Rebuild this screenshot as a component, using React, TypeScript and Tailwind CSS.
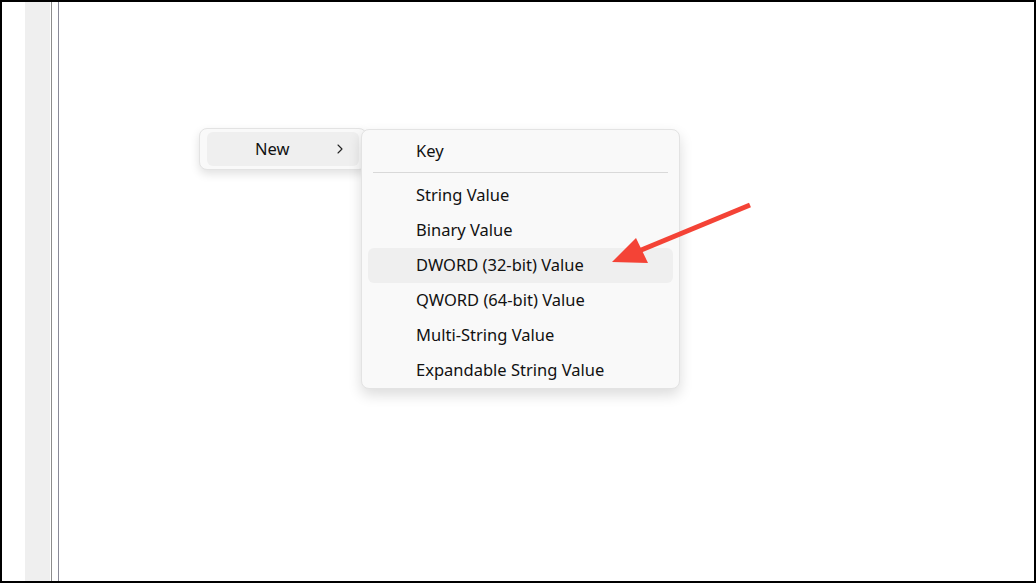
import { ChevronRight } from 'lucide-react';

const items = [
  'String Value',
  'Binary Value',
  'DWORD (32-bit) Value',
  'QWORD (64-bit) Value',
  'Multi-String Value',
  'Expandable String Value',
];

export default function App() {
  return (
    <div
      className="relative w-[1036px] h-[583px] border-2 border-black bg-white flex overflow-hidden"
      style={{ fontFamily: '"Noto Sans", "Segoe UI", Arial, sans-serif' }}
    >
      {/* left gutter of the registry editor */}
      <div className="w-[23px] shrink-0" />
      <div className="w-[25px] shrink-0 bg-[#efefef]" />
      <div className="w-[1px] shrink-0" />
      <div className="w-[1px] shrink-0 bg-[#8c8c8c]" />
      <div className="w-[6px] shrink-0" />
      <div className="w-[1px] shrink-0 bg-[#8a8a98]" />
      <div className="flex-1" />

      {/* context menu */}
      <div className="absolute left-[197px] top-[126px] w-[168px] p-[3px] pl-[7px] pr-[7px] bg-[#f9f9f9] border border-[#e3e3e3] rounded-lg shadow-[0_4px_10px_rgba(0,0,0,0.12)]">
        <div className="h-[34px] flex items-center bg-[#efefef] rounded-md pl-[48px] pr-[11px] text-[16.5px] text-[#111]">
          <span className="flex-1">New</span>
          <ChevronRight size={16} strokeWidth={1.6} className="text-[#222]" />
        </div>
      </div>

      {/* New submenu */}
      <div className="absolute left-[359px] top-[127px] w-[319px] pt-[4px] pb-0 px-[6px] bg-[#f9f9f9] border border-[#e3e3e3] rounded-lg shadow-[0_6px_14px_rgba(0,0,0,0.14)] z-10 text-[16.5px] text-[#111]">
        <div className="h-[34px] flex items-center pl-[48px]">Key</div>
        <div className="mx-[5px] mt-[4px] mb-[5px] h-[1px] bg-[#d9d9d9]" />
        {items.map((label, i) => (
          <div
            key={label}
            className={
              i === 2
                ? 'h-[35px] flex items-center pl-[48px] bg-[#efefef] rounded-md'
                : 'h-[35px] flex items-center pl-[48px]'
            }
          >
            {label}
          </div>
        ))}
      </div>

      {/* red annotation arrow */}
      <svg className="absolute left-0 top-0 z-20" width="1036" height="583">
        <line x1="748" y1="203" x2="632" y2="251" stroke="#f44336" strokeWidth="5" />
        <polygon points="610,260 634,236 646,261" fill="#f44336" />
      </svg>
    </div>
  );
}
